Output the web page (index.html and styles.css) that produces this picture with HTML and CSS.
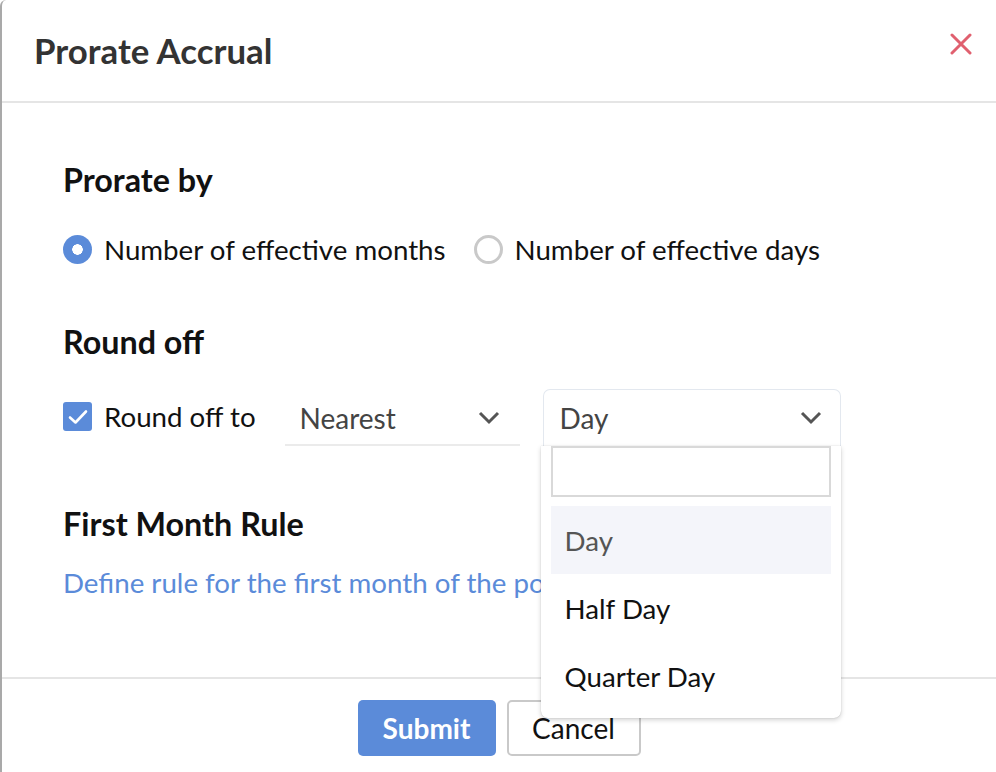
FILE: index.html
```html
<!DOCTYPE html>
<html>
<head>
<meta charset="utf-8">
<link rel="stylesheet" href="styles.css">
</head>
<body>
<div class="dialog">
  <div class="header">
    <h1 class="title">Prorate Accrual</h1>
    <svg class="close" width="22" height="22" viewBox="0 0 22 22"><path d="M2 2L20 20M20 2L2 20" stroke="#e0606f" stroke-width="3" stroke-linecap="round"/></svg>
  </div>
  <div class="content">
    <h2 class="section-title first">Prorate by</h2>
    <div class="radio-row">
      <label class="radio-opt"><span class="radio checked"></span><span>Number of effective months</span></label>
      <label class="radio-opt"><span class="radio"></span><span>Number of effective days</span></label>
    </div>
    <h2 class="section-title round">Round off</h2>
    <div class="round-row">
      <label class="check-opt">
        <span class="checkbox"><svg width="20" height="16" viewBox="0 0 20 16"><path d="M2 8.5L7.5 13.5L18 2.5" fill="none" stroke="#fff" stroke-width="2.6" stroke-linecap="round" stroke-linejoin="round"/></svg></span>
        <span>Round off to</span>
      </label>
      <div class="select nearest">
        <span>Nearest</span>
        <svg class="chev" width="22" height="14" viewBox="0 0 22 14"><path d="M2 2L11 11L20 2" fill="none" stroke="#555" stroke-width="3"/></svg>
      </div>
      <div class="select-wrap">
        <div class="select day">
          <span>Day</span>
          <svg class="chev" width="22" height="14" viewBox="0 0 22 14"><path d="M2 2L11 11L20 2" fill="none" stroke="#555" stroke-width="3"/></svg>
        </div>
        <div class="menu">
          <div class="search"></div>
          <div class="option active">Day</div>
          <div class="option">Half Day</div>
          <div class="option">Quarter Day</div>
        </div>
      </div>
    </div>
    <h2 class="section-title fmr">First Month Rule</h2>
    <a class="link">Define rule for the first month of the policy period</a>
  </div>
  <div class="footer">
    <button class="btn submit">Submit</button>
    <button class="btn cancel">Cancel</button>
  </div>
</div>
</body>
</html>
```
FILE: styles.css
```css
html, body {
  margin: 0;
  padding: 0;
  background: #fff;
}
body {
  font-family: Lato, "Open Sans", sans-serif;
  width: 996px;
  height: 772px;
  overflow: hidden;
}
.dialog {
  width: 996px;
  height: 790px;
  box-sizing: border-box;
  border-left: 2px solid #a9a9a9;
  border-top-left-radius: 6px;
  display: flex;
  flex-direction: column;
}
.header {
  height: 101px;
  border-bottom: 2px solid #e5e5e5;
  display: flex;
  align-items: center;
  justify-content: space-between;
  padding: 0 24px 0 32px;
  flex-shrink: 0;
}
.title {
  margin: 0;
  font-size: 34.8px;
  font-weight: 700;
  color: #333;
  line-height: 40px;
}
.close {
  margin-top: -14px;
}
.content {
  padding-left: 61px;
  height: 574px;
  flex-shrink: 0;
  box-sizing: border-box;
}
.section-title {
  margin: 0;
  font-size: 32.3px;
  font-weight: 700;
  color: #111;
  line-height: 34px;
}
.section-title.first { margin-top: 60px; }
.radio-row {
  display: flex;
  align-items: center;
  gap: 28px;
  margin-top: 35px;
  height: 34px;
}
.radio-opt, .check-opt {
  display: flex;
  align-items: center;
  gap: 12px;
  font-size: 27.7px;
  color: #111;
}
.radio {
  width: 29px;
  height: 29px;
  box-sizing: border-box;
  border-radius: 50%;
  border: 3px solid #c9c9c9;
  display: inline-block;
  flex-shrink: 0;
}
.radio.checked {
  border: none;
  background: radial-gradient(circle, #fff 0 5px, #5b8bd9 5.5px);
}
.section-title.round { margin-top: 59px; }
.round-row {
  display: flex;
  align-items: flex-end;
  margin-top: 30px;
  height: 57px;
}
.check-opt {
  align-self: center;
  margin-top: -2px;
}
.checkbox {
  width: 29px;
  height: 29px;
  border-radius: 3px;
  background: #5b8bd9;
  display: flex;
  align-items: center;
  justify-content: center;
  flex-shrink: 0;
}
.select {
  display: flex;
  align-items: center;
  justify-content: space-between;
  box-sizing: border-box;
  font-size: 28px;
  color: #444;
}
.nearest {
  margin-left: 29px;
  width: 235px;
  height: 54px;
  padding: 0 20px 0 15px;
  border-bottom: 2px solid #ebebeb;
}
.select-wrap {
  position: relative;
  margin-left: 23px;
}
.day {
  width: 298px;
  height: 57px;
  padding: 0 18px 0 16px;
  border: 1.5px solid #e3e8ef;
  border-bottom: none;
  border-radius: 7px 7px 0 0;
}
.menu {
  position: absolute;
  left: -2px;
  top: 57px;
  width: 300px;
  box-sizing: border-box;
  background: #fff;
  padding: 0 10px 8px;
  border-radius: 0 0 7px 7px;
  box-shadow: 0 2px 5px rgba(0,0,0,0.18), 0 0 1px rgba(0,0,0,0.25);
  z-index: 5;
}
.search {
  height: 51px;
  box-sizing: border-box;
  border: 2px solid #d9d9d9;
  margin-bottom: 9px;
}
.option {
  height: 68px;
  display: flex;
  align-items: center;
  padding-left: 14px;
  font-size: 27.7px;
  color: #111;
}
.option.active {
  background: #f4f5fa;
  color: #555;
}
.section-title.fmr { margin-top: 61px; }
.link {
  display: block;
  margin-top: 25px;
  font-size: 27.7px;
  color: #5b8bd9;
  white-space: nowrap;
  line-height: 34px;
  width: 478px;
  overflow: hidden;
}
.footer {
  border-top: 2px solid #e5e5e5;
  display: flex;
  justify-content: center;
  gap: 11px;
  padding-top: 21px;
}
.btn {
  height: 56px;
  box-sizing: border-box;
  border-radius: 5px;
  font-family: Lato, "Open Sans", sans-serif;
  font-size: 28px;
  cursor: pointer;
}
.submit {
  width: 138px;
  background: #5b8bd9;
  color: #fff;
  border: none;
  font-weight: 700;
}
.cancel {
  width: 134px;
  background: #fff;
  color: #111;
  border: 2px solid #c9c9c9;
}
```
